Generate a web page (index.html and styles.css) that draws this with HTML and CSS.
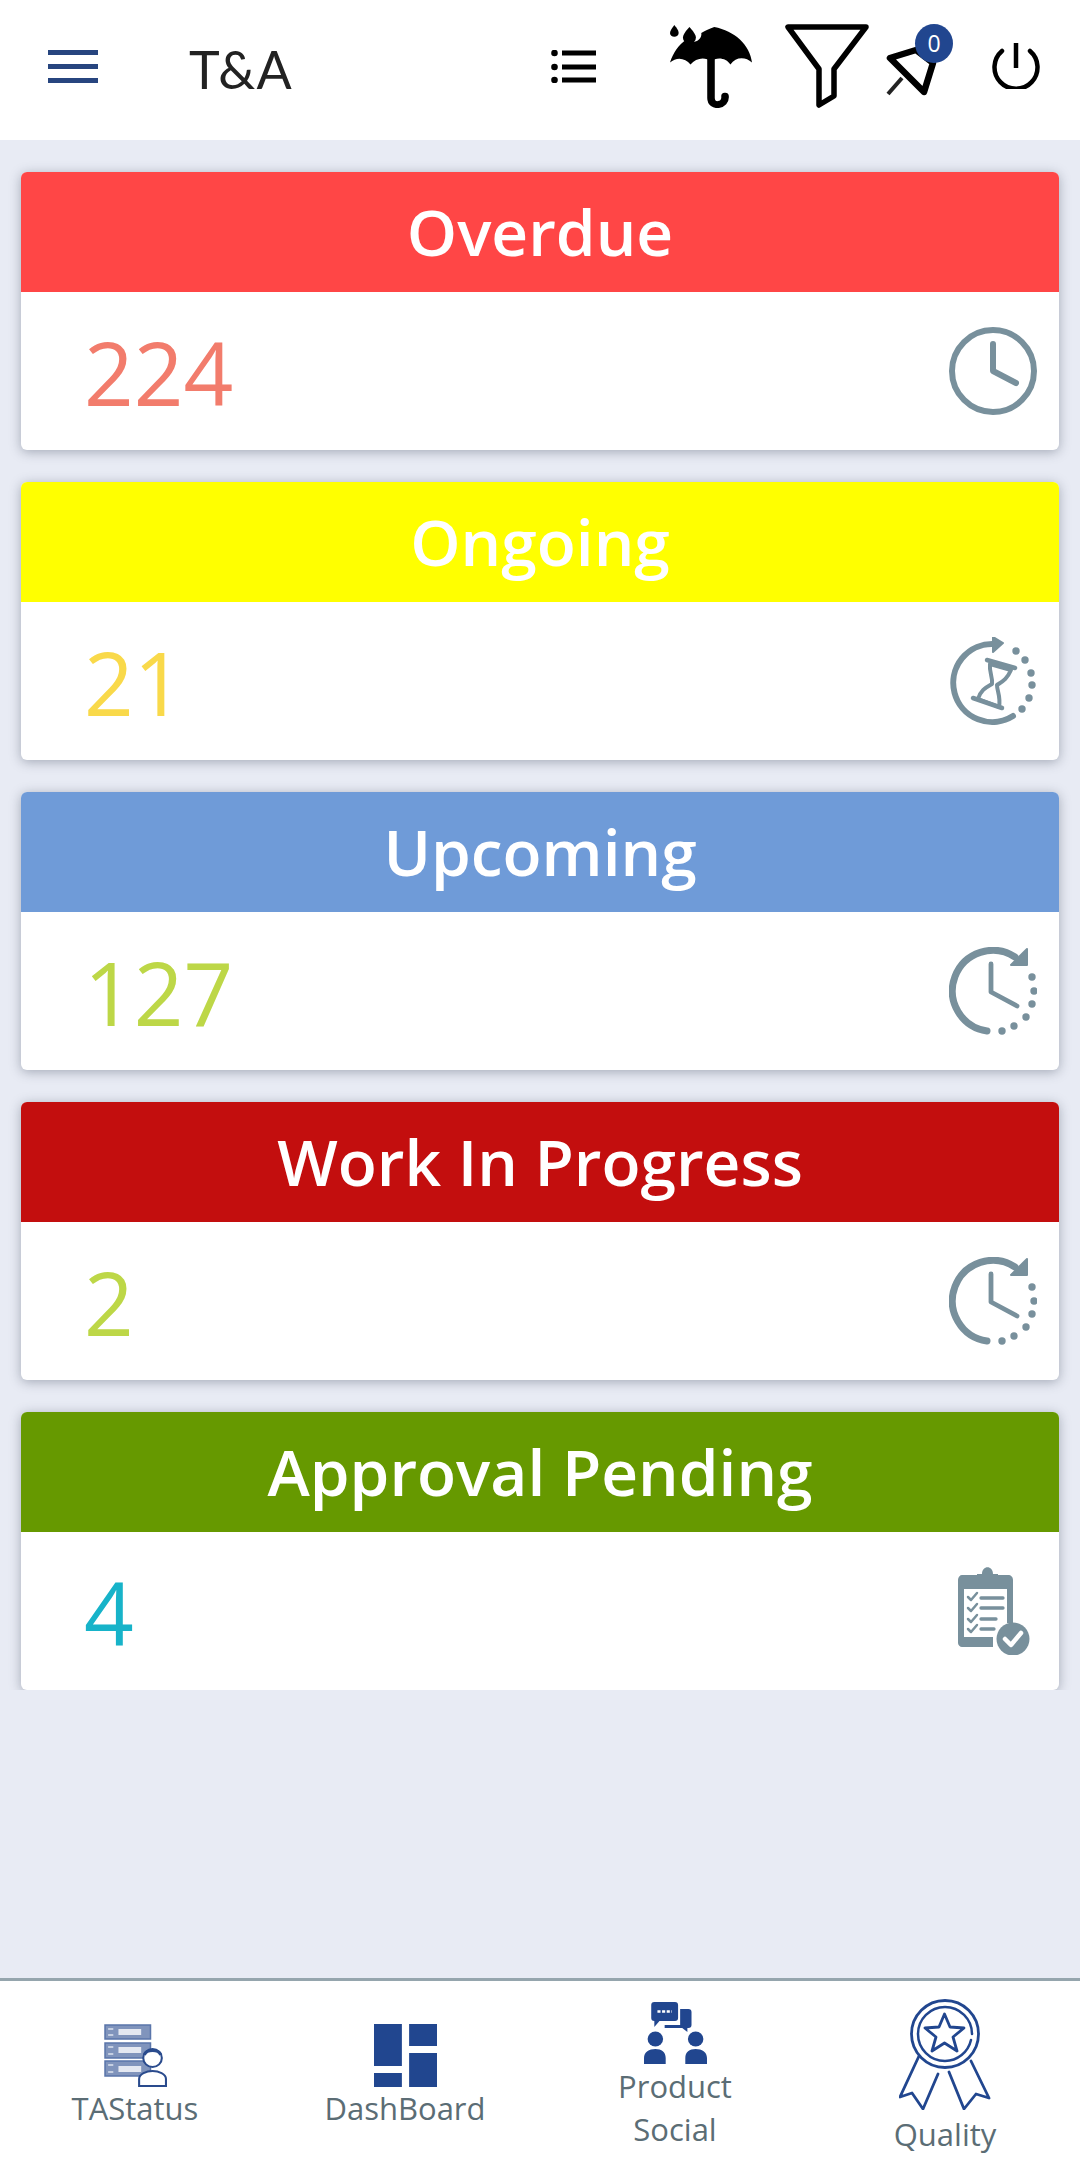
FILE: index.html
```html
<!DOCTYPE html>
<html lang="en">
<head>
    <meta charset="UTF-8">
    <meta name="viewport" content="width=device-width, initial-scale=1.0">
    <link rel="stylesheet" href="styles.css">
    <title>T&amp;A</title>
</head>
<body>
    <svg class="defs" width="0" height="0">
        <symbol id="clock-loop" viewBox="0 0 88 88">
            <path d="M38 84A40.500 40.500 0 1 1 66 10" fill="none" stroke="currentColor" stroke-width="7" stroke-linecap="round"/>
            <path d="M78 2L78 18 62 18Z" fill="currentColor" stroke="currentColor" stroke-width="2" stroke-linejoin="round"/>
            <path d="M42 17V45L68 59" fill="none" stroke="currentColor" stroke-width="4.800" stroke-linecap="round" stroke-linejoin="round"/>
            <g fill="currentColor">
                <circle cx="83" cy="30" r="3.700"/>
                <circle cx="85" cy="44" r="3.700"/>
                <circle cx="83" cy="57" r="3.700"/>
                <circle cx="77" cy="70" r="3.700"/>
                <circle cx="65" cy="79" r="3.700"/>
                <circle cx="53" cy="84" r="3.700"/>
            </g>
        </symbol>
    </svg>

    <header class="topbar">
        <svg class="menu-icon" viewBox="0 0 50 33" preserveAspectRatio="none"><path d="M0 2.500H50M0 16.500H50M0 30.500H50" stroke="#27457f" stroke-width="5"/></svg>
        <div class="page-title">T&amp;A</div>
        <svg class="list-icon" viewBox="0 0 45 33">
            <circle cx="3.500" cy="3" r="3.300"/><circle cx="3.500" cy="17" r="3.300"/><circle cx="3.500" cy="30" r="3.300"/>
            <path d="M11 3H45M11 17H45M11 30H45" stroke="#000" stroke-width="5"/>
        </svg>
        <svg class="umbrella-icon" viewBox="0 0 76 84" preserveAspectRatio="none">
            <path d="M4 0C7 4 8 6 8 8A4 4 0 0 1 0 8C0 6 2 3 4 0Z"/>
            <path d="M18 2C22 7 24 10 24 13A6 6 0 0 1 12 13C12 10 14 7 18 2Z"/>
            <path d="M41 2C60 6 74 20 76 38 70 32 61 32 56 40 52 33 43 32 38 37 33 32 24 33 19 40 14 33 6 32 0 38 3 28 8 20 15 15 22 20 30 15 29 8 32 6 36 4 41 2Z"/>
            <path d="M38 34V74C38 84 52 82 51 72" fill="none" stroke="#000" stroke-width="7" stroke-linecap="round"/>
        </svg>
        <svg class="funnel-icon" viewBox="0 0 84 84">
            <path d="M3 3H81L49 45V72L34 81V45Z" fill="none" stroke="#000" stroke-width="5.500" stroke-linejoin="round"/>
        </svg>
        <div class="pin-wrap">
            <svg class="pin-icon" viewBox="0 0 54 52">
                <path d="M4 14L30 6 47 19 38 48Z" fill="none" stroke="#000" stroke-width="6.500" stroke-linejoin="round"/>
                <path d="M2 50L16 34" stroke="#222" stroke-width="4"/>
            </svg>
            <span class="badge">0</span>
        </div>
        <svg class="power-icon" viewBox="0 0 48 47">
            <path d="M10 9A21.500 21.500 0 1 0 38 9" fill="none" stroke="#000" stroke-width="4.500" stroke-linecap="round"/>
            <path d="M24 1V26" stroke="#000" stroke-width="4.500"/>
        </svg>
    </header>

    <main class="cards">
        <section class="card">
            <h2 class="card-title title-red">Overdue</h2>
            <div class="card-body">
                <span class="count count-red">224</span>
                <svg class="card-icon" viewBox="0 0 88 88">
                    <circle cx="44" cy="44" r="41" fill="none" stroke="currentColor" stroke-width="6"/>
                    <path d="M44 17V44L67 56" fill="none" stroke="currentColor" stroke-width="6" stroke-linecap="round" stroke-linejoin="round"/>
                </svg>
            </div>
        </section>
        <section class="card">
            <h2 class="card-title title-yellow">Ongoing</h2>
            <div class="card-body">
                <span class="count count-yellow">21</span>
                <svg class="card-icon" viewBox="0 0 88 88">
                    <path d="M64 79A39 39 0 1 1 45 7" fill="none" stroke="currentColor" stroke-width="6" stroke-linecap="round"/>
                    <path d="M44 0L54 6 44 15Z" fill="currentColor" stroke="currentColor" stroke-width="2" stroke-linejoin="round"/>
                    <g fill="currentColor">
                        <circle cx="67" cy="14" r="3.700"/>
                        <circle cx="76" cy="23" r="3.700"/>
                        <circle cx="82" cy="36" r="3.700"/>
                        <circle cx="83" cy="48" r="3.700"/>
                        <circle cx="80" cy="61" r="3.700"/>
                        <circle cx="73" cy="72" r="3.700"/>
                    </g>
                    <path d="M38 23L66 31M24 61L53 71" stroke="currentColor" stroke-width="4.500" stroke-linecap="round"/>
                    <path d="M41 27C40 36 44 40 43 47 38 50 32 52 29 62L50 70C52 60 48 54 48 48 54 44 58 42 62 33Z" fill="none" stroke="currentColor" stroke-width="4" stroke-linejoin="round"/>
                </svg>
            </div>
        </section>
        <section class="card">
            <h2 class="card-title title-blue">Upcoming</h2>
            <div class="card-body">
                <span class="count count-green">127</span>
                <svg class="card-icon"><use href="#clock-loop"/></svg>
            </div>
        </section>
        <section class="card">
            <h2 class="card-title title-maroon">Work In Progress</h2>
            <div class="card-body">
                <span class="count count-green">2</span>
                <svg class="card-icon"><use href="#clock-loop"/></svg>
            </div>
        </section>
        <section class="card card-last">
            <h2 class="card-title title-olive">Approval Pending</h2>
            <div class="card-body">
                <span class="count count-teal">4</span>
                <svg class="card-icon" viewBox="0 0 88 88">
                    <path d="M13 8H28V12H49V8H59C62 8 64 10 64 13V56H58V22H15V70H44V80H13C11 80 9 78 9 76V13C9 10 11 8 13 8Z" fill="currentColor"/>
                    <path d="M28 12V7H33C33 -2 44 -2 44 7H49V12Z" fill="currentColor"/>
                    <path d="M19 30L22 33 28 26M19 41L22 44 28 37M19 52L22 55 28 48M19 62L22 65 28 58" fill="none" stroke="currentColor" stroke-width="2.500" stroke-linecap="round" stroke-linejoin="round"/>
                    <path d="M32 31H54M32 41H54M32 52H47M32 62H45" stroke="currentColor" stroke-width="3.300" stroke-linecap="round"/>
                    <circle cx="64" cy="72" r="16.500" fill="currentColor"/>
                    <path d="M56 72L62 78 72 66" fill="none" stroke="#fff" stroke-width="4.500" stroke-linecap="round" stroke-linejoin="round"/>
                </svg>
            </div>
        </section>
    </main>

    <footer class="tabs">
        <div class="tab">
            <svg class="tab-icon" viewBox="0 0 61 63" preserveAspectRatio="none">
                <g fill="#8094bc" stroke="#5a75aa" stroke-width="1.500">
                    <rect x="1" y="1" width="44" height="14"/>
                    <rect x="1" y="19" width="44" height="15"/>
                    <rect x="1" y="37" width="44" height="15"/>
                </g>
                <path d="M14 8H36M14 26H36M14 45H36" stroke="#e4e8f1" stroke-width="6"/>
                <path d="M4 5H9M4 11H9M4 23H9M4 30H9M4 41H9M4 48H9" stroke="#c5cfe2" stroke-width="2"/>
                <circle cx="47" cy="34" r="9" fill="#fff" stroke="#2a4b8d" stroke-width="2"/>
                <path d="M34 62V55C34 50 41 47 47 47 53 47 60 50 60 55V62Z" fill="#fff" stroke="#2a4b8d" stroke-width="2"/>
                <path d="M39 31C41 25 53 25 55 31" fill="none" stroke="#2a4b8d" stroke-width="3"/>
            </svg>
            <span class="tab-label">TAStatus</span>
        </div>
        <div class="tab">
            <svg class="tab-icon" viewBox="0 0 61 63" preserveAspectRatio="none">
                <path d="M0 0H27V42H0ZM34 0H61V22H34ZM34 29H61V63H34ZM0 49H27V63H0Z" fill="#21468f"/>
            </svg>
            <span class="tab-label">DashBoard</span>
        </div>
        <div class="tab">
            <svg class="tab-icon" viewBox="0 0 61 63" preserveAspectRatio="none">
                <path d="M10 0H30C32 0 33 1 33 3V16C33 18 32 19 30 19H15L10 25V19C8 19 7 18 7 16V3C7 1 8 0 10 0Z" fill="#21468f"/>
                <path d="M35 7H43C45 7 46 8 46 10V23C46 25 45 26 43 26H42V30L37 26H20V23H35Z" fill="#21468f"/>
                <path d="M13 9.500H27" stroke="#fff" stroke-width="2.500" stroke-dasharray="3 1.500"/>
                <circle cx="11" cy="37" r="7.500" fill="#21468f"/>
                <circle cx="50" cy="37" r="7.500" fill="#21468f"/>
                <path d="M0 62V56C0 50 5 47 11 47 17 47 21 50 21 56V62ZM40 62V56C40 50 44 47 50 47 56 47 61 50 61 56V62Z" fill="#21468f"/>
            </svg>
            <span class="tab-label">Product<br>Social</span>
        </div>
        <div class="tab tab-quality">
            <svg class="medal-icon" viewBox="0 0 92 112">
                <g fill="none" stroke="#21468f" stroke-width="2.800" stroke-linecap="round" stroke-linejoin="round">
                    <circle cx="46" cy="36" r="33.500"/>
                    <path d="M73 36A27 27 0 1 0 46 63 27 27 0 0 0 72 42" stroke-width="2.500"/>
                    <path d="M45.500 16L51 29 65 30 54 39 58 53 45.500 45 33 53 37 39 26 30 40 29Z"/>
                    <path d="M20 58L1 99 13 95 24 111 39 76"/>
                    <path d="M72 63L90 100 77 96 65 111 50 74"/>
                </g>
            </svg>
            <span class="tab-label quality-label">Quality</span>
        </div>
    </footer>
</body>
</html>
```

FILE: styles.css
```css
*{
    box-sizing: border-box;
}

body{
    margin: 0;
    width: 1080px;
    height: 2166px;
    display: flex;
    flex-direction: column;
    background-color: #e8ebf4;
    font-family: 'Open Sans', sans-serif;
}

svg{
    display: block;
    flex: none;
}

.defs{
    position: absolute;
}

.topbar{
    height: 140px;
    flex: none;
    display: flex;
    align-items: center;
    background-color: #fff;
}

.menu-icon{
    width: 50px;
    height: 33px;
    margin-left: 48px;
    margin-top: -7px;
}

.page-title{
    width: 362px;
    margin-left: 91px;
    margin-top: -3px;
    font-family: 'Lato', sans-serif;
    font-size: 52px;
    color: #222;
}

.list-icon{
    width: 45px;
    height: 33px;
    margin-top: -7px;
}

.umbrella-icon{
    width: 82px;
    height: 83px;
    margin-left: 74px;
    margin-top: -7px;
}

.funnel-icon{
    width: 84px;
    height: 84px;
    margin-left: 33px;
    margin-top: -8px;
}

.pin-wrap{
    position: relative;
    width: 54px;
    height: 52px;
    margin-left: 17px;
}

.pin-icon{
    width: 54px;
    height: 52px;
    filter: blur(0.7px);
}

.badge{
    position: absolute;
    left: 29px;
    top: -20px;
    width: 38px;
    height: 39px;
    border-radius: 50%;
    background-color: #21468f;
    color: #fff;
    font-size: 23px;
    line-height: 39px;
    text-align: center;
}

.power-icon{
    width: 48px;
    height: 47px;
    margin-left: 52px;
    margin-top: -9px;
}

.cards{
    flex: 1;
    display: flex;
    flex-direction: column;
    gap: 32px;
    padding: 32px 21px 0;
}

.card{
    height: 278px;
    border-radius: 6px;
    background-color: #fff;
    box-shadow: 0 2px 12px rgba(60, 70, 90, 0.4);
    overflow: hidden;
}

.card-last{
    clip-path: inset(-20px -20px 0 -20px);
}

.card-title{
    height: 120px;
    margin: 0;
    color: #fff;
    font-size: 64px;
    font-weight: 600;
    line-height: 120px;
    text-align: center;
}

.title-red{
    background-color: #ff4646;
}

.title-yellow{
    background-color: #ffff00;
}

.title-blue{
    background-color: #6f9bd8;
}

.title-maroon{
    background-color: #c30e0e;
}

.title-olive{
    background-color: #669900;
}

.card-body{
    height: 158px;
    display: flex;
    align-items: center;
    justify-content: space-between;
    padding: 0 22px 0 63px;
    color: #78909c;
}

.count{
    padding-top: 2px;
    font-size: 87px;
    line-height: 1;
}

.count-red{
    color: #f27c6c;
}

.count-yellow{
    color: #f9d94a;
}

.count-green{
    color: #bdd747;
}

.count-teal{
    color: #17b3c9;
}

.card-icon{
    width: 88px;
    height: 88px;
}

.tabs{
    height: 188px;
    flex: none;
    display: grid;
    grid-template-columns: repeat(4, 270px);
    border-top: 3px solid #95a5ad;
    background-color: #fff;
}

.tab{
    display: flex;
    flex-direction: column;
    align-items: center;
    justify-content: center;
    padding-top: 6px;
}

.tab-quality{
    padding-top: 7px;
}

.tab-icon{
    width: 63px;
    height: 63px;
}

.medal-icon{
    width: 92px;
    height: 112px;
}

.tab-label{
    color: #5b6d75;
    font-size: 31px;
    line-height: 43px;
    text-align: center;
}

.quality-label{
    margin-top: 3px;
}
```
